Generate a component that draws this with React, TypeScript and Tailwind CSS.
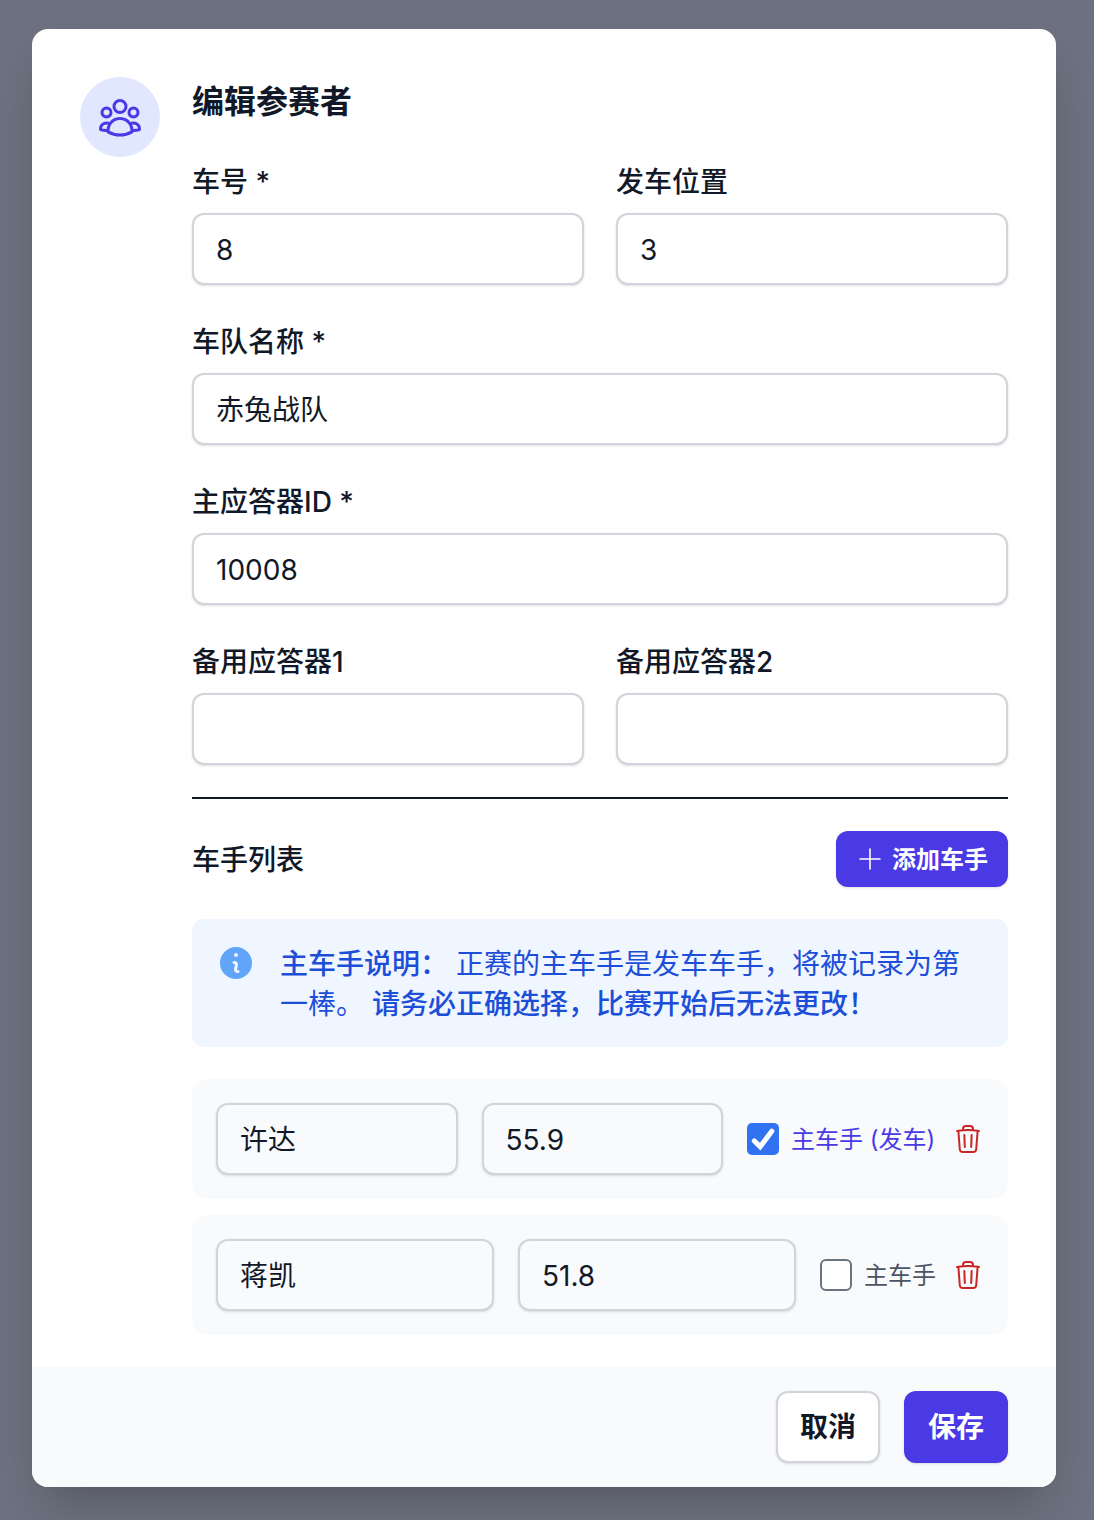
import React from "react";

const FONT = '[font-family:Inter,"Noto_Sans_CJK_SC",sans-serif]';

function Field({ label, value, cjk = false, className = "" }: { label: string; value?: string; cjk?: boolean; className?: string }) {
  return (
    <div className={className}>
      <label className="block h-10 text-[28px] leading-[42px] font-medium text-[#111827]">{label}</label>
      <input
        readOnly
        defaultValue={value}
        className={
          cjk
            ? "mt-3 block h-[72px] w-full rounded-xl border-2 border-[#d1d5db] bg-white px-[22px] pb-[2px] text-[28px] text-[#111827] shadow-sm outline-none"
            : "mt-3 block h-[72px] w-full rounded-xl border-2 border-[#d1d5db] bg-white px-[22px] pt-px text-[28px] text-[#111827] shadow-sm outline-none"
        }
      />
    </div>
  );
}

function Trash() {
  return (
    <svg viewBox="0 0 24 24" fill="none" stroke="currentColor" strokeWidth={1.5} className="h-8 w-8 shrink-0 text-[#c62828]">
      <path strokeLinecap="round" strokeLinejoin="round" d="m14.74 9-.346 9m-4.788 0L9.26 9m9.968-3.21c.342.052.682.107 1.022.166m-1.022-.165L18.16 19.673a2.25 2.25 0 0 1-2.244 2.077H8.084a2.25 2.25 0 0 1-2.244-2.077L4.772 5.79m14.456 0a48.108 48.108 0 0 0-3.478-.397m-12 .562c.34-.059.68-.114 1.022-.165m0 0a48.11 48.11 0 0 1 3.478-.397m7.5 0v-.916c0-1.18-.91-2.164-2.09-2.201a51.964 51.964 0 0 0-3.32 0c-1.18.037-2.09 1.022-2.09 2.201v.916m7.5 0a48.667 48.667 0 0 0-7.5 0" />
    </svg>
  );
}

function DriverInput({ value, cjk = false }: { value: string; cjk?: boolean }) {
  return (
    <input
      readOnly
      defaultValue={value}
      className={
        cjk
          ? "block h-[72px] min-w-0 flex-1 rounded-xl border-2 border-[#d1d5db] bg-[#f9fafb] px-[22px] pb-[2px] text-[28px] text-[#111827] shadow-sm outline-none"
          : "block h-[72px] min-w-0 flex-1 rounded-xl border-2 border-[#d1d5db] bg-[#f9fafb] px-[22px] pt-px text-[28px] text-[#111827] shadow-sm outline-none"
      }
    />
  );
}

function DriverRow({ name, time, main }: { name: string; time: string; main: boolean }) {
  return (
    <div className="flex items-center gap-4 rounded-2xl bg-[#f9fafb] p-6">
      <div className="flex min-w-0 flex-1 items-center gap-6">
        <DriverInput value={name} cjk />
        <DriverInput value={time} />
        <div className="flex shrink-0 items-center gap-3">
          {main ? (
            <span className="block h-8 w-8 rounded-[5px] bg-[#3072f0]">
              <svg viewBox="0 0 24 24" fill="none" stroke="white" strokeWidth={3.8} className="h-8 w-8">
                <path strokeLinecap="round" strokeLinejoin="miter" d="M5.5 13.5l4.4 4.2L18.6 6.2" />
              </svg>
            </span>
          ) : (
            <span className="block h-8 w-8 rounded-[6px] border-2 border-[#6b7280] bg-white" />
          )}
          <span className={main ? "block h-8 w-[145px] text-2xl leading-[34px] text-[#4a3ae6]" : "block h-8 text-2xl leading-[34px] text-[#4b5563]"}>
            {main ? "主车手 (发车)" : "主车手"}
          </span>
        </div>
      </div>
      <Trash />
    </div>
  );
}

export default function App() {
  return (
    <div className={`${FONT} min-h-[1520px] bg-[#6e7280] pl-8 pt-[29px]`}>
      <div className="w-[1024px] overflow-hidden rounded-2xl bg-white shadow-2xl">
        <div className="flex gap-8 px-12 pb-8 pt-12">
          <div className="flex h-20 w-20 shrink-0 items-center justify-center rounded-full bg-[#e0e7ff]">
            <svg viewBox="0 0 24 24" fill="none" stroke="currentColor" strokeWidth={1.5} className="h-12 w-12 text-[#4a3ae6]">
              <path strokeLinecap="round" strokeLinejoin="round" d="M18 18.72a9.094 9.094 0 0 0 3.741-.479 3 3 0 0 0-4.682-2.72m.94 3.198.001.031c0 .225-.012.447-.037.666A11.944 11.944 0 0 1 12 21c-2.17 0-4.207-.576-5.963-1.584A6.062 6.062 0 0 1 6 18.719m12 0a5.971 5.971 0 0 0-.941-3.197m0 0A5.995 5.995 0 0 0 12 12.75a5.995 5.995 0 0 0-5.058 2.772m0 0a3 3 0 0 0-4.681 2.72 8.986 8.986 0 0 0 3.74.477m.94-3.197a5.971 5.971 0 0 0-.94 3.197M15 6.75a3 3 0 1 1-6 0 3 3 0 0 1 6 0Zm6 3a2.25 2.25 0 1 1-4.5 0 2.25 2.25 0 0 1 4.5 0Zm-13.5 0a2.25 2.25 0 1 1-4.5 0 2.25 2.25 0 0 1 4.5 0Z" />
            </svg>
          </div>
          <div className="min-w-0 flex-1">
            <h3 className="h-12 text-[32px] leading-[50px] font-semibold text-[#111827]">编辑参赛者</h3>
            <div className="mt-9 flex flex-col gap-9">
              <div className="grid grid-cols-2 gap-8">
                <Field label="车号 *" value="8" />
                <Field label="发车位置" value="3" />
              </div>
              <Field label="车队名称 *" value="赤兔战队" cjk />
              <Field label="主应答器ID *" value="10008" />
              <div className="grid grid-cols-2 gap-8">
                <Field label="备用应答器1" />
                <Field label="备用应答器2" />
              </div>
            </div>
            <div className="mt-8 h-0.5 bg-[#111827]" />
            <div className="mt-8 flex items-center justify-between">
              <h4 className="h-10 text-[28px] leading-[42px] font-medium text-[#111827]">车手列表</h4>
              <button className="flex h-14 items-center gap-1.5 rounded-xl bg-[#4a3ae6] pl-[18px] pr-5 pt-[2px] text-2xl font-semibold text-white shadow-sm">
                <svg viewBox="0 0 24 24" fill="none" stroke="currentColor" strokeWidth={1.2} className="-mt-[2px] h-8 w-8">
                  <path strokeLinecap="round" strokeLinejoin="round" d="M12 4.5v15m7.5-7.5h-15" />
                </svg>
                添加车手
              </button>
            </div>
            <div className="mt-8 flex h-32 gap-6 rounded-xl bg-[#eff6ff] p-6">
              <svg viewBox="0 0 20 20" fill="currentColor" className="h-10 w-10 shrink-0 text-[#60a5fa]">
                <path fillRule="evenodd" clipRule="evenodd" d="M18 10a8 8 0 11-16 0 8 8 0 0116 0zm-7-4a1 1 0 11-2 0 1 1 0 012 0zM9 9a.75.75 0 000 1.5h.253a.25.25 0 01.244.304l-.459 2.066A1.75 1.75 0 0010.747 15H11a.75.75 0 000-1.5h-.253a.25.25 0 01-.244-.304l.459-2.066A1.75 1.75 0 009.253 9H9z" />
              </svg>
              <p className="pt-px text-[28px] leading-[40px] text-[#1d4ed8]">
                <strong className="font-medium">主车手说明：</strong> 正赛的主车手是发车车手，将被记录为第一棒。 <strong className="font-medium">请务必正确选择，比赛开始后无法更改！</strong>
              </p>
            </div>
            <div className="mt-8 flex flex-col gap-4">
              <DriverRow name="许达" time="55.9" main />
              <DriverRow name="蒋凯" time="51.8" main={false} />
            </div>
          </div>
        </div>
        <div className="flex justify-end gap-6 bg-[#f9fafb] px-12 py-6">
          <button className="h-[72px] rounded-xl border-2 border-[#d1d5db] bg-white px-[22px] text-[28px] font-semibold text-[#111827] shadow-sm">取消</button>
          <button className="h-[72px] rounded-xl bg-[#4a3ae6] px-6 text-[28px] font-semibold text-white shadow-sm">保存</button>
        </div>
      </div>
    </div>
  );
}
